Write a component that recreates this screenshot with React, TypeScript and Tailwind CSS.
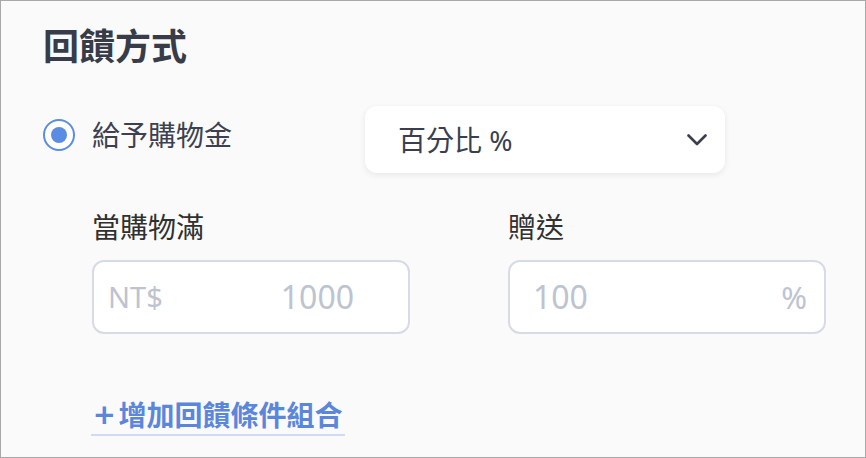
const font = {
  fontFamily: '"Noto Sans", "Noto Sans CJK TC", sans-serif',
};

const App = () => {
  return (
    <div
      className="w-[866px] h-[458px] overflow-hidden border border-[#a8a8a8] bg-[#fafafa]"
      style={font}
    >
      <div className="pl-[42px] pt-[22px]">
        <h1 className="text-[36px] leading-[48px] font-bold text-[#373c48]">
          回饋方式
        </h1>

        <div className="mt-[35px] flex items-start">
          <label className="mt-[13px] flex items-center w-[322px]">
            <span className="w-[32px] h-[32px] rounded-full border-2 border-[#5b8ce3] bg-white flex items-center justify-center">
              <span className="w-[16px] h-[16px] rounded-full bg-[#5b8ce3]" />
            </span>
            <span className="ml-[17px] text-[28px] leading-[32px] text-[#3c4151]">
              給予購物金
            </span>
          </label>
          <button className="w-[360px] h-[67px] rounded-[12px] bg-white shadow-[0_2px_6px_rgba(0,0,0,0.08)] flex items-center justify-between pl-[33px] pr-[18px]">
            <span className="text-[28px] text-[#3a3f4e]">百分比 %</span>
            <svg width="20" height="12" viewBox="0 0 20 12" fill="none">
              <polyline
                points="1.5,1.5 10,10 18.5,1.5"
                stroke="#3a3f4e"
                strokeWidth="2.6"
                strokeLinecap="round"
                strokeLinejoin="round"
              />
            </svg>
          </button>
        </div>

        <div className="mt-[38px] ml-[49px] flex gap-[98px]">
          <div className="w-[318px]">
            <div className="text-[28px] leading-[32px] text-[#303030]">當購物滿</div>
            <div className="mt-[17px] h-[74px] rounded-[12px] border-2 border-[#d5dce6] bg-white flex items-center justify-between pl-[14px] pr-[54px]">
              <span className="text-[29px] text-[#bdc3d0]">NT$</span>
              <span className="text-[32px] text-[#bdc3d0]">1000</span>
            </div>
          </div>
          <div className="w-[318px]">
            <div className="text-[28px] leading-[32px] text-[#303030]">贈送</div>
            <div className="mt-[17px] h-[74px] rounded-[12px] border-2 border-[#d5dce6] bg-white flex items-center justify-between pl-[23px] pr-[17px]">
              <span className="text-[32px] text-[#bdc3d0]">100</span>
              <span className="text-[31px] text-[#bdc3d0]">%</span>
            </div>
          </div>
        </div>

        <div className="mt-[62px] ml-[48px]">
          <a className="inline-flex items-center h-[40px] pl-[3px] pr-[2px] border-b-2 border-[#cddcf6] text-[28px] leading-[38px] font-bold text-[#5a86dc]">
            <span className="text-[36px] leading-none font-semibold mr-[4px]">+</span>
            增加回饋條件組合
          </a>
        </div>
      </div>
    </div>
  );
};

export default App;
